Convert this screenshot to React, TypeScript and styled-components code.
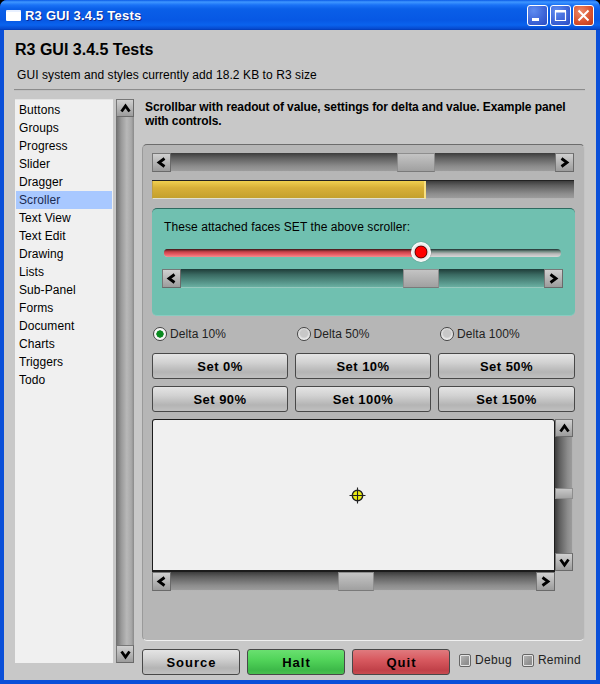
import React from "react";
import styled, { createGlobalStyle, css } from "styled-components";

const Global = createGlobalStyle`
  html, body { margin: 0; padding: 0; background: #000; }
  #root { width: 600px; height: 684px; }
  * { box-sizing: border-box; }
`;

const Win = styled.div`
  width: 600px; height: 684px; display: flex; flex-direction: column;
  font-family: "Liberation Sans", Arial, sans-serif; font-size: 12px; color: #000;
  letter-spacing: 0.08px; overflow: hidden;
  border-radius: 7px 7px 0 0; background: #0a4fd8;
`;
const TitleBar = styled.div`
  height: 30px; flex: none; display: flex; align-items: center; padding: 0 6px 0 6px;
  background: linear-gradient(180deg, #0a5ae6 0, #3f97ff 2px, #1a72f6 5px, #0a5fe8 9px, #0758e4 20px, #0a63ee 25px, #0648cc 29px, #0038b0 30px);
`;
const TitleIcon = styled.div`
  width: 15px; height: 11px; background: #fff; border-top: 2px solid #e8f0ff; margin: 0 4px 0 0;
  border-radius: 1px;
`;
const TitleText = styled.div`
  flex: 1; color: #fff; font-weight: bold; font-size: 13px; letter-spacing: 0.22px; text-shadow: 1px 1px 0 #0a2a90;
`;
const CapButton = styled.div<{ $close?: boolean }>`
  width: 21px; height: 21px; margin-left: 2px; border: 1px solid #fff; border-radius: 3px;
  display: flex; align-items: center; justify-content: center;
  background: ${p => p.$close
    ? "radial-gradient(circle at 35% 30%, #ee8a6a, #d8502c 60%, #b83a1e)"
    : "radial-gradient(circle at 30% 25%, #5f8cf0, #3f66d8 55%, #2a4cc4)"};
`;
const Client = styled.div`
  flex: 1; min-height: 0; display: flex; flex-direction: column; background: #c8c8c8;
  margin: 0 4px 4px 4px; padding: 0 10px 0 10px;
`;
const Heading = styled.h1`
  margin: 11px 0 0 1px; font-size: 16px; line-height: 18px; font-weight: bold; letter-spacing: 0;
`;
const Sub = styled.div`
  margin: 9px 0 0 3px; line-height: 14px; font-size: 12px;
`;
const Rule = styled.div`
  height: 2px; margin: 7px 1px 0 0; background: #8c8c8c; border-bottom: 1px solid #c0c0c0;
`;
const Body = styled.div`
  flex: 1; min-height: 0; display: flex; margin-top: 7px;
`;
const List = styled.div`
  width: 98px; height: 564px; margin: 1px 0 0 1px; padding: 1px 1px; background: #f0f0f0; flex: none;
  border-top: 1px solid #e4e4e4;
`;
const Item = styled.div<{ $on?: boolean }>`
  height: 18px; line-height: 18px; padding-left: 3px; font-size: 12px;
  background: ${p => (p.$on ? "#a8c8ff" : "transparent")};
  color: ${p => (p.$on ? "#1a2a50" : "#000")};
`;
const Right = styled.div`
  flex: none; width: 443px; margin-left: 8px; display: flex; flex-direction: column;
`;
const Desc = styled.div`
  font-weight: bold; line-height: 14px; font-size: 12px; margin: 2px 0 0 3px; height: 44px; letter-spacing: -0.1px;
`;
const Panel = styled.div`
  height: 497px; flex: none; background: #b6b6b6; border-radius: 5px; padding: 8px 9px 0 9px;
  border-top: 1px solid #6c6c6c; border-left: 1px solid #9a9a9a; border-bottom: 1px solid #f0f0f0; border-right: 1px solid #c4c4c4;
  display: flex; flex-direction: column;
`;

const dark = "linear-gradient(180deg, #3c3c3c 0, #5e5e5e 25%, #8c8c8c 70%, #9c9c9c 95%, #d0d0d0 100%)";
const teal = "linear-gradient(180deg, #1e3c38 0, #3a6a62 30%, #5a9a8e 75%, #6ab0a2 95%, #c8e4dc 100%)";

const Track = styled.div<{ $w: number; $teal?: boolean }>`
  width: ${p => p.$w}px; height: 19px; flex: none; display: flex;
  background: ${p => (p.$teal ? teal : dark)};
`;
const ThumbRow = styled.div`
  flex: 1; min-width: 0; display: flex;
`;
const Thumb = styled.div<{ $at: number; $size: number }>`
  margin-left: ${p => p.$at}px; width: ${p => p.$size}px; height: 100%;
  background: linear-gradient(180deg, #c4c4c4, #a0a0a0);
  border: 1px solid #8e8e8e; border-bottom-color: #7a7a7a;
`;
const ArrowBtn = styled.div`
  flex: none; width: 19px; height: 19px; display: flex; align-items: center; justify-content: center;
  background: linear-gradient(180deg, #d0d0d0, #9c9c9c);
  border: 1px solid #6a6a6a; border-top-color: #777; border-left-color: #777;
`;
const Chev: React.FC<{ dir: "l" | "r" | "u" | "d" }> = ({ dir }) => {
  const rot = { l: 0, r: 180, u: 90, d: 270 }[dir];
  return (
    <svg width="11" height="11" viewBox="0 0 11 11" style={{ transform: `rotate(${rot}deg)` }}>
      <path d="M8.5 1.5 L3 5.5 L8.5 9.5" fill="none" stroke="#000" strokeWidth="2.8" />
    </svg>
  );
};
const HScroll: React.FC<{ w: number; at: number; size: number; teal?: boolean }> = ({ w, at, size, teal }) => (
  <Track $w={w} $teal={teal}>
    <ArrowBtn><Chev dir="l" /></ArrowBtn>
    <ThumbRow><Thumb $at={at} $size={size} /></ThumbRow>
    <ArrowBtn><Chev dir="r" /></ArrowBtn>
  </Track>
);

const VTrack = styled.div<{ $h: number }>`
  width: 18px; height: ${p => p.$h}px; flex: none; display: flex; flex-direction: column;
  background: linear-gradient(90deg, #3c3c3c 0, #5e5e5e 25%, #8c8c8c 70%, #9c9c9c 95%, #d0d0d0 100%);
`;
const SideBar = styled(VTrack)`
  margin: 1px 0 0 3px;
  background: linear-gradient(90deg, #6e6e6e 0, #9a9a9a 30%, #b8b8b8 60%, #a8a8a8 85%, #8a8a8a 100%);
`;
const VArrow = styled(ArrowBtn)`
  width: 18px; height: 18px;
`;
const VRow = styled.div`
  flex: 1; min-height: 0; display: flex; flex-direction: column;
`;
const VThumb = styled.div<{ $at: number; $size: number }>`
  margin-top: ${p => p.$at}px; height: ${p => p.$size}px; width: 100%;
  background: linear-gradient(180deg, #c8c8c8, #a4a4a4); border: 1px solid #8e8e8e;
`;

const Progress = styled.div`
  width: 422px; height: 19px; margin-top: 8px; flex: none; display: flex; background: ${dark};
  border-top: 1px solid #222;
`;
const Fill = styled.div<{ $w: number }>`
  width: ${p => p.$w}px; height: 100%;
  background: linear-gradient(180deg, #f0d050 0, #d8b038 40%, #c4a02c 100%);
  border-right: 2px solid #f8e080; border-left: 1px solid #c0a040; border-bottom: 1px solid #e0e0d0;
`;
const TealBox = styled.div`
  width: 423px; height: 108px; margin-top: 9px; flex: none; background: #70c0b0; border-radius: 5px;
  border-top: 1px solid #2e6a60; padding: 11px 11px 0 10px;
  border-bottom: 1px solid #88ccc0;
  display: flex; flex-direction: column;
`;
const TealLabel = styled.div`
  line-height: 14px; margin-left: 2px;
`;
const SliderWrap = styled.div`
  position: relative; height: 8px; width: 397px; margin: 15px 0 0 2px; border-radius: 4px; display: flex; overflow: visible;
  background: linear-gradient(180deg, #1e3030 0, #708880 30%, #b8b8b8 60%, #d8d8d8 100%);
`;
const SliderFill = styled.div<{ $w: number }>`
  width: ${p => p.$w}px; height: 100%; border-radius: 4px 0 0 4px;
  background: linear-gradient(180deg, #3a1818 0, #c84048 35%, #ec6068 70%, #f09090 100%);
`;
const Knob = styled.div<{ $x: number }>`
  position: absolute; left: ${p => p.$x}px; top: -7px; width: 20px; height: 20px; border-radius: 50%;
  background: radial-gradient(circle, #f00 0, #f00 36%, #500 42%, #e4e4e4 48%, #fff 70%, #b0b0b0 100%);
  box-shadow: 0 0 1px #444;
`;
const TealScrollWrap = styled.div`
  margin: 12px 0 0 0;
`;
const Radios = styled.div`
  display: grid; grid-template-columns: repeat(3, 143.5px); height: 16px; margin-top: 10px; align-items: center; flex: none;
`;
const RadioItem = styled.div`
  display: flex; align-items: center; gap: 3px; color: #222;
`;
const RadioDot = styled.div<{ $on?: boolean }>`
  width: 14px; height: 14px; border-radius: 50%; margin-left: 1px; border: 1px solid #444;
  background: ${p => p.$on
    ? "radial-gradient(circle, #0a8a20 0, #0a8a20 40%, #f4f4f4 46%, #fff 100%)"
    : "radial-gradient(circle at 50% 45%, #c8c8c8 0, #c8c8c8 40%, #f4f4f4 70%, #fff 100%)"};
`;
const Grid = styled.div`
  display: grid; grid-template-columns: 136px 136px 137px; gap: 7px; margin-top: 11px; flex: none;
`;
const Btn = styled.div<{ $tone?: "green" | "red" }>`
  height: 26px; border: 1px solid #484848; border-radius: 3px; display: flex; align-items: center; justify-content: center;
  font-weight: bold; font-size: 13px; letter-spacing: 0.45px; color: #000;
  ${p => !p.$tone && css`background: linear-gradient(180deg, #e4e4e4 0, #d2d2d2 35%, #b4b4b4 75%, #c0c0c0 100%);`}
  ${p => p.$tone === "green" && css`background: linear-gradient(180deg, #6ae070 0, #52d45a 40%, #3cb848 85%, #48c050 100%);`}
  ${p => p.$tone === "red" && css`background: linear-gradient(180deg, #e07a7e 0, #d85a60 40%, #c04048 85%, #c84c50 100%);`}
`;
const CanvasRow = styled.div`
  display: flex; margin-top: 7px; flex: none; width: 422px;
`;
const Canvas = styled.div`
  width: 403px; height: 153px; background: #f0f0f0; border-radius: 3px 3px 0 0; border: 1px solid #1c1c1c; border-bottom-width: 2px;
  border-right-width: 1px; display: flex; align-items: center; justify-content: center; padding-left: 8px;
`;
const Footer = styled.div`
  display: flex; align-items: center; margin-top: 8px; gap: 7px; height: 26px; flex: none;
`;
const FootBtn = styled(Btn)`
  width: 98px; height: 26px; letter-spacing: 1px; padding-left: 1px;
`;
const Check = styled.div<{ $ml?: number }>`
  display: flex; align-items: center; gap: 4px; color: #222; margin-left: ${p => p.$ml ?? 0}px; margin-top: -4px; letter-spacing: 0.3px;
`;
const Box = styled.div`
  width: 12px; height: 13px; border: 1px solid #666; border-radius: 2px;
  background: linear-gradient(135deg, #b8b8b8, #909090 70%); box-shadow: inset 0 0 0 1px #e4e4e4;
`;

const items = ["Buttons","Groups","Progress","Slider","Dragger","Scroller","Text View","Text Edit","Drawing","Lists","Sub-Panel","Forms","Document","Charts","Triggers","Todo"];

export default function App() {
  return (
    <>
      <Global />
      <Win>
        <TitleBar>
          <TitleIcon />
          <TitleText>R3 GUI 3.4.5 Tests</TitleText>
          <CapButton>
            <svg width="19" height="19" viewBox="0 0 19 19"><rect x="4" y="12" width="7" height="3" fill="#fff" /></svg>
          </CapButton>
          <CapButton>
            <svg width="19" height="19" viewBox="0 0 19 19"><path d="M4.5 5.5h10v9h-10z" fill="none" stroke="#fff" strokeWidth="1.2" /><rect x="4" y="4" width="11" height="2.5" fill="#fff" /></svg>
          </CapButton>
          <CapButton $close>
            <svg width="19" height="19" viewBox="0 0 19 19"><path d="M4.5 4.5 L14.5 14.5 M14.5 4.5 L4.5 14.5" stroke="#fff" strokeWidth="2" /></svg>
          </CapButton>
        </TitleBar>
        <Client>
          <Heading>R3 GUI 3.4.5 Tests</Heading>
          <Sub>GUI system and styles currently add 18.2 KB to R3 size</Sub>
          <Rule />
          <Body>
            <List>
              {items.map(t => <Item key={t} $on={t === "Scroller"}>{t}</Item>)}
            </List>
            <SideBar $h={564}>
              <VArrow><Chev dir="u" /></VArrow>
              <VRow />
              <VArrow><Chev dir="d" /></VArrow>
            </SideBar>
            <Right>
              <Desc>Scrollbar with readout of value, settings for delta and value. Example panel with controls.</Desc>
              <Panel>
                <HScroll w={422} at={226} size={38} />
                <Progress><Fill $w={274} /></Progress>
                <TealBox>
                  <TealLabel>These attached faces SET the above scroller:</TealLabel>
                  <SliderWrap>
                    <SliderFill $w={248} />
                    <Knob $x={247} />
                  </SliderWrap>
                  <TealScrollWrap>
                    <HScroll w={401} at={222} size={36} teal />
                  </TealScrollWrap>
                </TealBox>
                <Radios>
                  <RadioItem><RadioDot $on />Delta 10%</RadioItem>
                  <RadioItem><RadioDot />Delta 50%</RadioItem>
                  <RadioItem><RadioDot />Delta 100%</RadioItem>
                </Radios>
                <Grid>
                  {["Set 0%","Set 10%","Set 50%","Set 90%","Set 100%","Set 150%"].map(t => <Btn key={t}>{t}</Btn>)}
                </Grid>
                <CanvasRow>
                  <Canvas>
                    <svg width="17" height="17" viewBox="0 0 17 17">
                      <circle cx="8.5" cy="8.5" r="5.2" fill="#ecec10" stroke="#222" strokeWidth="1.4" />
                      <path d="M8.5 0.5V16.5M0.5 8.5H16.5" stroke="#222" strokeWidth="1.1" />
                    </svg>
                  </Canvas>
                  <VTrack $h={152}>
                    <VArrow><Chev dir="u" /></VArrow>
                    <VRow><VThumb $at={51} $size={11} /></VRow>
                    <VArrow><Chev dir="d" /></VArrow>
                  </VTrack>
                </CanvasRow>
                <HScroll w={403} at={167} size={36} />
              </Panel>
              <Footer>
                <FootBtn>Source</FootBtn>
                <FootBtn $tone="green">Halt</FootBtn>
                <FootBtn $tone="red">Quit</FootBtn>
                <Check $ml={2}><Box />Debug</Check>
                <Check $ml={3}><Box />Remind</Check>
              </Footer>
            </Right>
          </Body>
        </Client>
      </Win>
    </>
  );
}
